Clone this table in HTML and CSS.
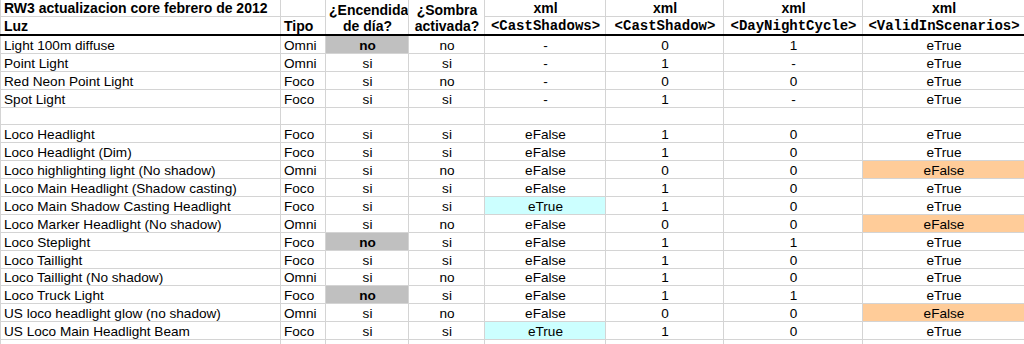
FILE: index.html
```html
<!DOCTYPE html>
<html lang="es">
<head>
    <meta charset="UTF-8">
    <title>RW3 actualizacion core febrero de 2012</title>
    <link rel="stylesheet" href="styles.css">
</head>
<body>

    <table class="sheet">
        <colgroup>
            <col class="c-luz">
            <col class="c-tipo">
            <col class="c-dia">
            <col class="c-sombra">
            <col class="c-cast">
            <col class="c-cast1">
            <col class="c-day">
            <col class="c-valid">
        </colgroup>
        <thead>
            <tr class="head-1">
                <th class="left">RW3 actualizacion core febrero de 2012</th>
                <th></th>
                <th rowspan="2" class="wrap">¿Encendida<br>de día?</th>
                <th rowspan="2" class="wrap">¿Sombra<br>activada?</th>
                <th>xml</th>
                <th>xml</th>
                <th>xml</th>
                <th>xml</th>
            </tr>
            <tr class="head-2">
                <th class="left">Luz</th>
                <th class="left">Tipo</th>
                <th class="mono">&lt;CastShadows&gt;</th>
                <th class="mono">&lt;CastShadow&gt;</th>
                <th class="mono">&lt;DayNightCycle&gt;</th>
                <th class="mono">&lt;ValidInScenarios&gt;</th>
            </tr>
        </thead>
        <tbody id="rows"></tbody>
    </table>

    <script>
        // luz, tipo, encendida, sombra, castShadows, castShadow, dayNight, valid
        const lights = [
            ["Light 100m diffuse", "Omni", "no", "no", "-", "0", "1", "eTrue"],
            ["Point Light", "Omni", "si", "si", "-", "1", "-", "eTrue"],
            ["Red Neon Point Light", "Foco", "si", "no", "-", "0", "0", "eTrue"],
            ["Spot Light", "Foco", "si", "si", "-", "1", "-", "eTrue"],
            null,
            ["Loco Headlight", "Foco", "si", "si", "eFalse", "1", "0", "eTrue"],
            ["Loco Headlight (Dim)", "Foco", "si", "si", "eFalse", "1", "0", "eTrue"],
            ["Loco highlighting light (No shadow)", "Omni", "si", "no", "eFalse", "0", "0", "eFalse"],
            ["Loco Main Headlight (Shadow casting)", "Foco", "si", "si", "eFalse", "1", "0", "eTrue"],
            ["Loco Main Shadow Casting Headlight", "Foco", "si", "si", "eTrue", "1", "0", "eTrue"],
            ["Loco Marker Headlight (No shadow)", "Omni", "si", "no", "eFalse", "0", "0", "eFalse"],
            ["Loco Steplight", "Foco", "no", "si", "eFalse", "1", "1", "eTrue"],
            ["Loco Taillight", "Foco", "si", "si", "eFalse", "1", "0", "eTrue"],
            ["Loco Taillight (No shadow)", "Omni", "si", "no", "eFalse", "1", "0", "eTrue"],
            ["Loco Truck Light", "Foco", "no", "si", "eFalse", "1", "1", "eTrue"],
            ["US loco headlight glow (no shadow)", "Omni", "si", "no", "eFalse", "0", "0", "eFalse"],
            ["US Loco Main Headlight Beam", "Foco", "si", "si", "eTrue", "1", "0", "eTrue"],
            null
        ];

        let html = '';
        lights.forEach(row => {
            if (!row) {
                html += '<tr><td></td><td></td><td></td><td></td><td></td><td></td><td></td><td></td></tr>';
                return;
            }
            const [luz, tipo, dia, sombra, cast, cast1, day, valid] = row;
            html += `
                <tr>
                    <td class="left">${luz}</td>
                    <td class="left">${tipo}</td>
                    <td class="${dia === 'no' ? 'off' : ''}">${dia}</td>
                    <td>${sombra}</td>
                    <td class="${cast === 'eTrue' ? 'cyan' : ''}">${cast}</td>
                    <td>${cast1}</td>
                    <td>${day}</td>
                    <td class="${valid === 'eFalse' ? 'tan' : ''}">${valid}</td>
                </tr>`;
        });
        document.getElementById("rows").innerHTML = html;
    </script>
</body>
</html>
```

FILE: styles.css
```css
body {
    margin: 0;
    font-family: "Liberation Sans", Arial, sans-serif;
    font-size: 13.6px;
    color: #000;
    background: #fff;
}

.sheet {
    width: 1024px;
    table-layout: fixed;
    border-collapse: collapse;
}

.c-luz { width: 280px; }
.c-tipo { width: 45px; }
.c-dia { width: 83px; }
.c-sombra { width: 76px; }
.c-cast { width: 121px; }
.c-cast1 { width: 118px; }
.c-day { width: 139px; }
.c-valid { width: 162px; }

.sheet th,
.sheet td {
    border: 1px solid #d4d4d4;
    padding: 0 2px 0 3px;
    height: 16.9px;
    line-height: 15px;
    text-align: center;
    vertical-align: bottom;
    white-space: nowrap;
    overflow: hidden;
}

.sheet th {
    font-weight: bold;
    font-size: 14px;
    line-height: 16px;
}

.sheet .left {
    text-align: left;
}

.head-1 th {
    height: 16px;
    border-top: none;
}

.head-2 th {
    height: 17px;
    border-bottom: 2px solid #000;
}

.sheet th.wrap {
    border-bottom: 2px solid #000;
    line-height: 16px;
    height: auto;
}

.sheet th.mono {
    font-family: "Liberation Mono", "Courier New", monospace;
    font-size: 14px;
}

.sheet td.off {
    background: #c0c0c0;
    font-weight: bold;
}

.sheet td.cyan {
    background: #ccffff;
}

.sheet td.tan {
    background: #ffcc99;
}
```
